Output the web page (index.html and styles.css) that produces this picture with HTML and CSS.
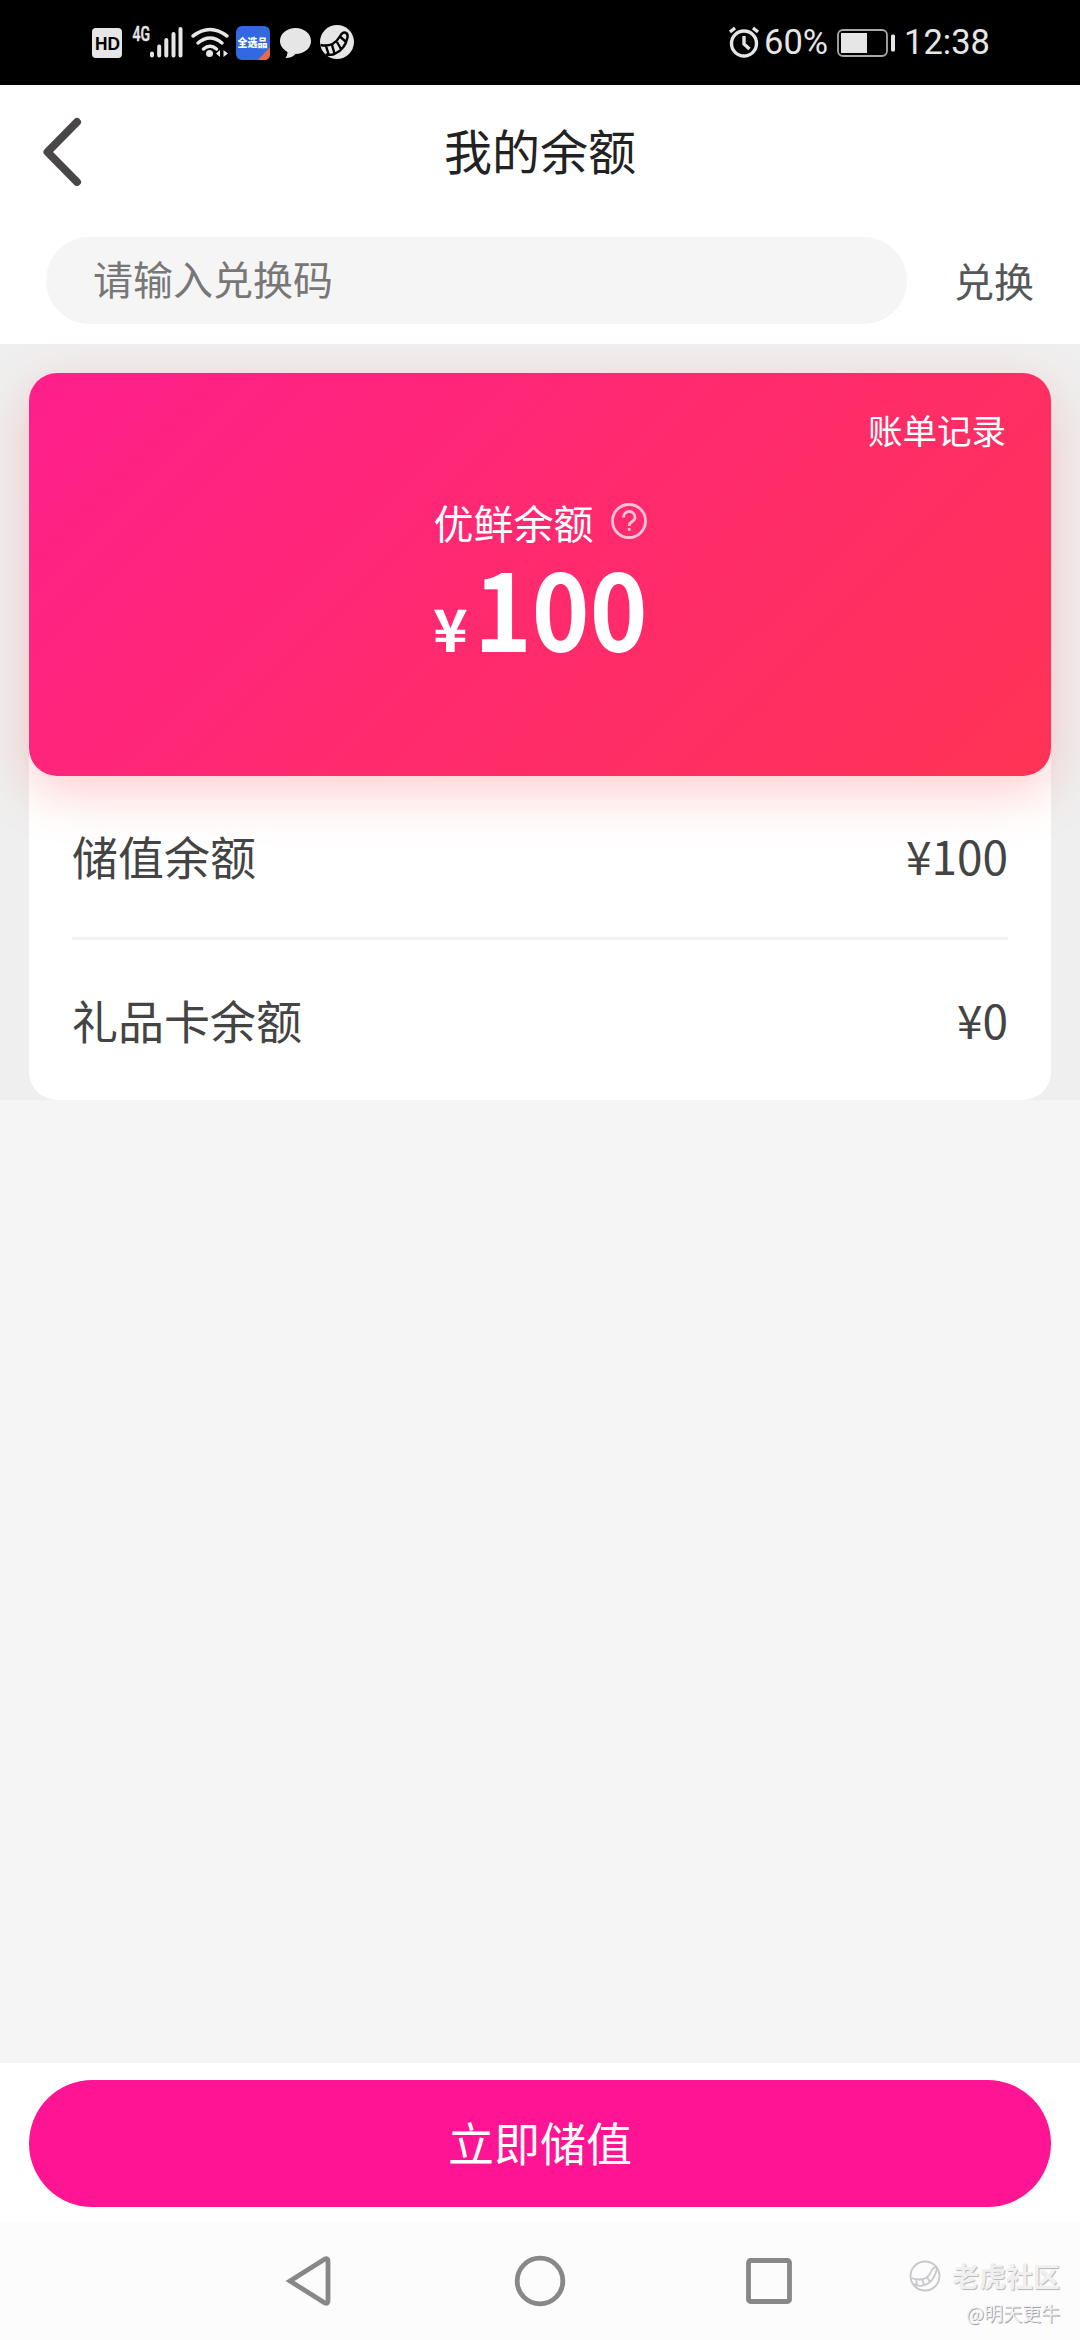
FILE: index.html
```html
<!DOCTYPE html>
<html lang="zh-CN">
<head>
<meta charset="utf-8">
<title>我的余额</title>
<link rel="stylesheet" href="styles.css">
</head>
<body>
<header class="status">
  <svg class="status-left" viewBox="80 0 290 85" aria-hidden="true">
    <rect x="92" y="28" width="30" height="30" rx="4"/>
    <text class="hd" x="95" y="49.500" textLength="25" lengthAdjust="spacingAndGlyphs">HD</text>
    <text class="net" x="132.500" y="40.500" textLength="17.500" lengthAdjust="spacingAndGlyphs">4G</text>
    <g class="bars"><path d="M152 53.500v2M159.200 46.500v9M166.300 40v15.500M173.500 34v21.500M180.500 29v26.500"/></g>
    <g class="wifi"><path d="M193 36q17-13 34 0M198 43q12-10 24 0M203.500 49q6.500-5.500 13 0"/></g>
    <circle cx="209.500" cy="53.500" r="3.500"/>
    <path d="M220 50v7l-4-3.500zM223.500 50v7l4.500-3.500z"/>
    <rect class="app" x="236" y="26" width="34" height="34" rx="6"/>
    <path class="corner" d="M258 60l12-13v7q0 6-6 6z"/>
    <text class="app-name" x="237.500" y="47" textLength="30" lengthAdjust="spacingAndGlyphs">全选品</text>
    <path d="M295.500 28c8.500 0 15.500 5.500 15.500 13s-7 13-15.500 13c-3 3-6 4-10 4 1-1.500 2-3.500 2-6-4.500-2.500-7.500-6.500-7.500-11 0-7.500 7-13 15.500-13z"/>
    <circle cx="337" cy="42" r="17"/>
    <path class="tail" d="M320.500 45q7 1.500 12-1 5-3 8-8.500c3-5 8-3 7 2q-2.500 12-13 16.500-5 1.500-9 .5M326 46l2.500 8M332 45l2.500 8.500M337 42l4 7M340.500 37l5 4.500"/>
  </svg>
  <div class="status-right">
    <svg class="alarm" viewBox="0 0 32 32"><circle cx="16" cy="17.500" r="12.500"/><path d="M2 6l5-4M30 6l-5-4M16 10v8l5.500 5"/></svg>
    <span class="percent">60%</span>
    <svg class="battery" viewBox="0 0 60 28"><rect class="shell" x="1" y="1" width="49" height="26" rx="5"/><path d="M4 4h26v20H4z"/><rect x="54" y="5.500" width="4" height="17" rx="1.500"/></svg>
    <span class="clock">12:38</span>
  </div>
</header>
<div class="top">
  <div class="title-bar">
    <svg class="back" viewBox="0 0 38 68"><path d="M34 4L4.500 34l29.500 30"/></svg>
    <h1>我的余额</h1>
  </div>
  <div class="redeem">
    <div class="field">请输入兑换码</div>
    <div class="redeem-btn">兑换</div>
  </div>
</div>
<main>
  <section class="wallet">
    <div class="panel">
      <div class="card">
        <div class="records">账单记录</div>
        <div class="label"><span>优鲜余额</span>
          <svg class="help" viewBox="0 0 36 36"><circle cx="18" cy="18" r="16.500"/><path d="M12.500 14.500c0-8 11.500-8 11.500 0 0 4.500-5.800 3.500-5.800 8.500M18.200 25v2.800"/></svg>
        </div>
        <div class="amount"><span class="yen">¥</span><span class="num">100</span></div>
      </div>
      <div class="row"><span>储值余额</span><span>¥100</span></div>
      <div class="row last"><span>礼品卡余额</span><span>¥0</span></div>
    </div>
  </section>
</main>
<footer><div class="store">立即储值</div></footer>
<nav class="nav">
  <svg class="keys" viewBox="280 0 520 118"><path d="M290 59l35-22q3-1 3 2v40q0 3-3 2z"/><circle cx="540" cy="59" r="22.800"/><rect x="748.500" y="38.500" width="41" height="41" rx="2"/></svg>
  <div class="mark">
    <div class="brand"><svg viewBox="0 0 32 32"><circle cx="16" cy="16" r="14.500"/><path d="M2 18q9 3 15 0 4-3 6-8c3-5 6-3 4 2q-3 10-11 13-6 2-11-1M7 19l1 6M13 19l2 6M18 17l3 5"/></svg><span>老虎社区</span></div>
    <div class="user">@明天更牛</div>
  </div>
</nav>
</body>
</html>
```
FILE: styles.css
```css
* { box-sizing: border-box; }
body {
  margin: 0;
  width: 1080px;
  height: 2340px;
  display: flex;
  flex-direction: column;
  overflow: hidden;
  background: #f5f5f5;
  font-family: "Noto Sans CJK SC", sans-serif;
}
svg { display: block; overflow: visible; }

.status {
  height: 85px;
  background: #000;
  display: flex;
  justify-content: space-between;
  padding: 0 93px 0 80px;
}
.status-left { width: 290px; height: 85px; fill: #e6e6e6; }
.hd { font: bold 18.500px "Liberation Sans", sans-serif; fill: #000; }
.net { font: 500 19.500px Roboto, sans-serif; stroke: #e6e6e6; stroke-width: .5; }
.bars, .wifi { fill: none; stroke: #e6e6e6; stroke-width: 4; stroke-linecap: round; }
.wifi { stroke-width: 3.500; }
.app { fill: #3468e0; }
.corner { fill: #e86a48; }
.app-name { font: 900 11px "Noto Sans CJK SC", sans-serif; fill: #fff; }
.tail { fill: none; stroke: #000; stroke-width: 2.400; }
.status-right { display: flex; align-items: center; color: #e6e6e6; font: 34.500px/85px Roboto, sans-serif; }
.alarm { width: 32px; height: 32px; margin-top: -2px; fill: none; stroke: #e6e6e6; stroke-width: 3.400; }
.percent { margin-left: 4px; width: 62px; white-space: nowrap; }
.battery { width: 60px; height: 28px; margin-left: 11px; fill: #e6e6e6; }
.shell { fill: none; stroke: #aaa; stroke-width: 1.800; }
.clock { margin-left: 7px; width: 83px; white-space: nowrap; }

.top { height: 259px; background: #fff; }
.title-bar { height: 134px; display: grid; grid-template-columns: 80px 1fr 80px; align-items: center; }
.back { width: 38px; height: 68px; margin: 0 0 0 43px; fill: none; stroke: #4a4748; stroke-width: 8; stroke-linecap: round; stroke-linejoin: round; }
h1 { margin: -6px 0 0; text-align: center; font-size: 48px; line-height: 70px; font-weight: 400; color: #222; }
.redeem { display: flex; padding: 18px 46px 0; justify-content: space-between; }
.field { width: 861px; height: 87px; border-radius: 44px; background: #f5f5f5; padding-left: 47px; font-size: 40px; line-height: 82px; color: #777; }
.redeem-btn { font-size: 40px; line-height: 87px; color: #55575b; }

.wallet { height: 756px; padding: 29px 29px 0; background: #efefef; overflow: hidden; }
.panel { height: 727px; border-radius: 28px; background: #fff; }
.card {
  height: 403px;
  border-radius: 28px;
  background: linear-gradient(135deg, #ff1f8c, #ff2a6e 50%, #ff3355);
  box-shadow: 0 17px 50px rgba(255, 60, 60, .25);
  color: #fff;
  padding: 31px 45px 0;
}
.records { text-align: right; font-size: 34.500px; line-height: 50px; }
.label { display: flex; align-items: center; justify-content: center; gap: 17px; margin-top: 38px; font-size: 40px; line-height: 60px; }
.help { width: 36px; height: 36px; margin-top: -2px; fill: none; stroke: #ffc4da; stroke-width: 2.800; }
.amount { display: flex; align-items: baseline; justify-content: center; gap: 6px; font-weight: 700; line-height: 110px; margin-top: -1px; }
.yen { font-size: 59px; }
.num { font-size: 106px; width: 173px; transform: scaleX(.925); transform-origin: left; }
.row { display: flex; justify-content: space-between; align-items: center; height: 164px; padding-bottom: 3px; margin: 0 43px; font-size: 46px; color: #444; border-bottom: 3px solid #f2f2f2; }
.row.last { height: 160px; padding-bottom: 2px; border: 0; }

footer { margin-top: 963px; height: 159px; padding: 17px 29px 0; background: #fff; }
.store { height: 127px; border-radius: 64px; background: #ff1493; color: #fff; text-align: center; font-size: 46px; line-height: 122px; }
.nav { height: 118px; background: #fcfcfc; display: flex; justify-content: space-between; padding: 0 20px 0 280px; }
.keys { width: 520px; height: 118px; fill: none; stroke: #888; stroke-width: 4.800; }
.mark { padding-top: 37px; color: #f0f0f1; }
.brand { display: flex; align-items: center; gap: 11px; font-size: 27px; line-height: 34px; font-weight: 700; text-shadow: 1px 1px 1px #b4b4bc; }
.brand svg { width: 32px; height: 32px; fill: none; stroke: #c8c8cc; stroke-width: 1.800; }
.user { text-align: right; font-size: 19px; line-height: 26px; margin-top: 7px; text-shadow: 1px 1px 0 #a4a4aa; }
```
